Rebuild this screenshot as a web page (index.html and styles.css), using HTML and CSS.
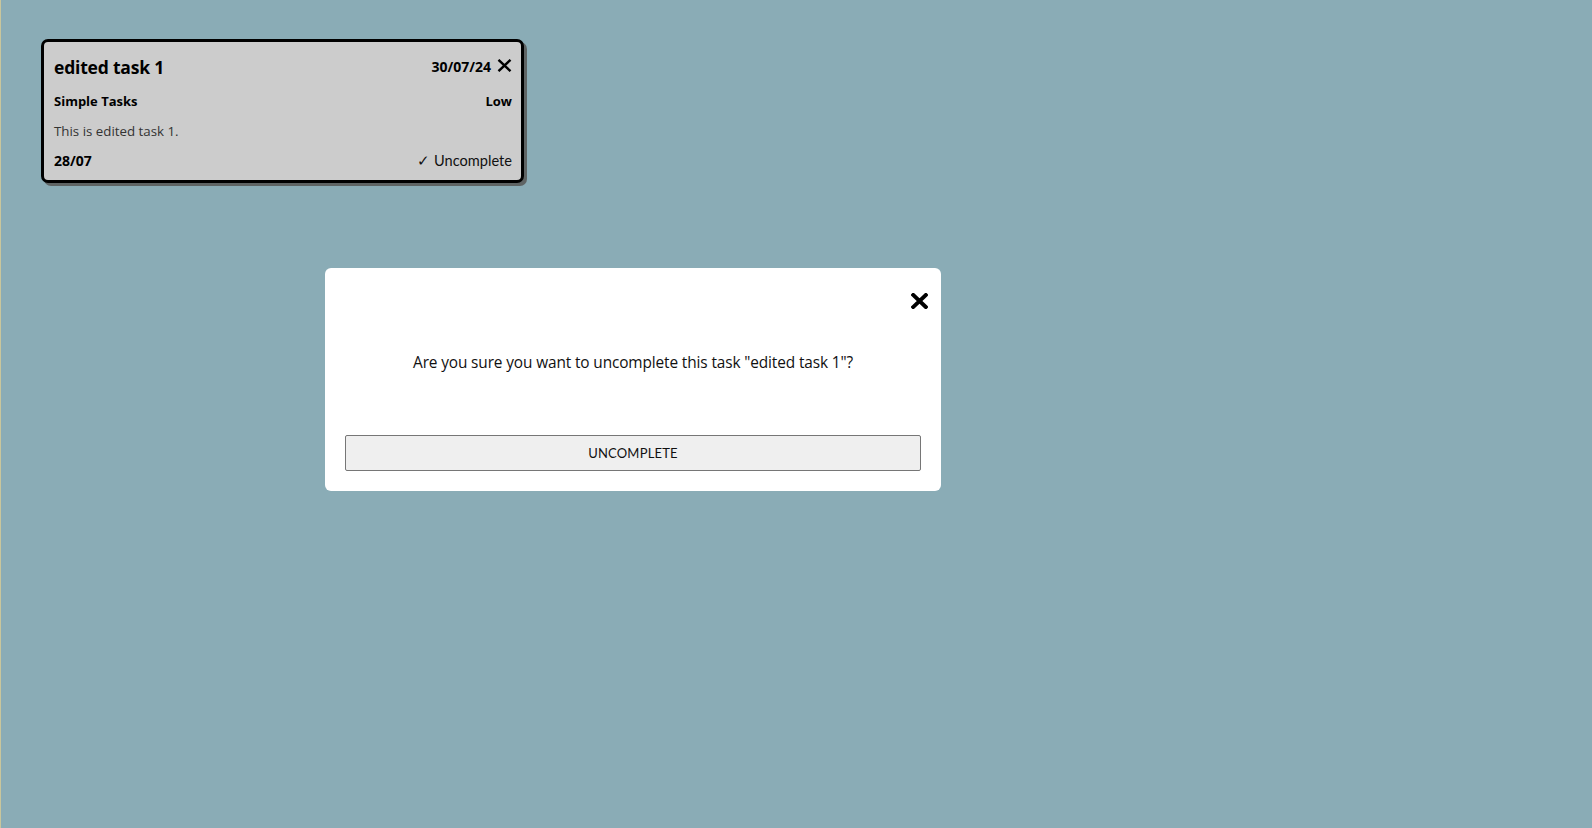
FILE: index.html
```html
<!DOCTYPE html>
<html lang="en">
<head>
<meta charset="utf-8">
<title>Tasks</title>
<link rel="stylesheet" href="styles.css">
</head>
<body>
<div class="page">
  <div class="board">
    <div class="card">
      <div class="row row-head">
        <span class="title">edited task 1</span>
        <span class="head-right">
          <span class="due">30/07/24</span>
          <svg class="del" viewBox="0 0 15 13" width="15" height="13" aria-hidden="true">
            <path d="M1.5 0.8 L13.5 12.2 M13.5 0.8 L1.5 12.2" stroke="#000" stroke-width="2.4" fill="none"/>
          </svg>
        </span>
      </div>
      <div class="row">
        <span class="strong">Simple Tasks</span>
        <span class="strong">Low</span>
      </div>
      <div class="row">
        <span class="desc">This is edited task 1.</span>
      </div>
      <div class="row">
        <span class="strong date">28/07</span>
        <span class="toggle">✓ Uncomplete</span>
      </div>
    </div>
  </div>

  <div class="modal">
    <div class="modal-head">
      <svg class="modal-close" viewBox="0 0 17 16" width="17" height="16" aria-hidden="true">
        <path d="M2.2 2 L14.8 14 M14.8 2 L2.2 14" stroke="#000" stroke-width="3.9" stroke-linecap="square" fill="none"/>
      </svg>
    </div>
    <p class="modal-msg">Are you sure you want to uncomplete this task "edited task 1"?</p>
    <button class="modal-btn">UNCOMPLETE</button>
  </div>
</div>
</body>
</html>
```

FILE: styles.css
```css
html, body {
  margin: 0;
  padding: 0;
  height: 100%;
}

body {
  background: #8aacb6;
  font-family: "Open Sans", "Noto Sans", sans-serif;
  color: #000;
}

.page {
  position: relative;
  height: 100%;
  border-left: 1px solid #c9c69c;
  box-sizing: border-box;
}

.board {
  padding: 39px 0 0 40px;
}

.card {
  width: 483px;
  box-sizing: border-box;
  background: #cccccc;
  border: 3px solid #000;
  border-radius: 7px;
  box-shadow: 3px 3px 0 #5f6464;
  padding: 10px 9px 9px 10px;
  display: flex;
  flex-direction: column;
  gap: 10px;
}

.row {
  display: flex;
  justify-content: space-between;
  align-items: center;
  font-size: 13px;
  line-height: 20px;
}

.row-head {
  line-height: 29px;
}

.title {
  font-size: 17.5px;
  font-weight: 700;
  letter-spacing: -0.2px;
  position: relative;
  top: 1px;
}

.head-right {
  display: flex;
  align-items: center;
  gap: 6px;
}

.due {
  font-size: 14px;
  font-weight: 700;
}

.del {
  display: block;
  margin-top: -2px;
}

.strong {
  font-weight: 700;
}

.date {
  font-size: 14px;
}

.desc {
  color: #333;
  font-weight: 400;
  font-size: 13.3px;
}

.toggle {
  font-family: "Lato", sans-serif;
  font-size: 14.6px;
  color: #111;
}

.modal {
  position: absolute;
  left: 324px;
  top: 268px;
  width: 616px;
  box-sizing: border-box;
  background: #fff;
  border-radius: 6px;
  padding: 25px 20px 20px 20px;
}

.modal-head {
  display: flex;
  justify-content: flex-end;
  height: 16px;
}

.modal-close {
  display: block;
  margin-right: -7px;
}

.modal-msg {
  margin: 42px 0 0 0;
  text-align: center;
  font-size: 15.4px;
  letter-spacing: -0.12px;
  line-height: 24px;
  color: #111;
}

.modal-btn {
  display: block;
  width: 100%;
  height: 36px;
  margin-top: 60px;
  background: #efefef;
  border: 1px solid #767676;
  border-radius: 2px;
  font-family: "Lato", sans-serif;
  font-size: 13px;
  color: #111;
  letter-spacing: 0.2px;
}
```
